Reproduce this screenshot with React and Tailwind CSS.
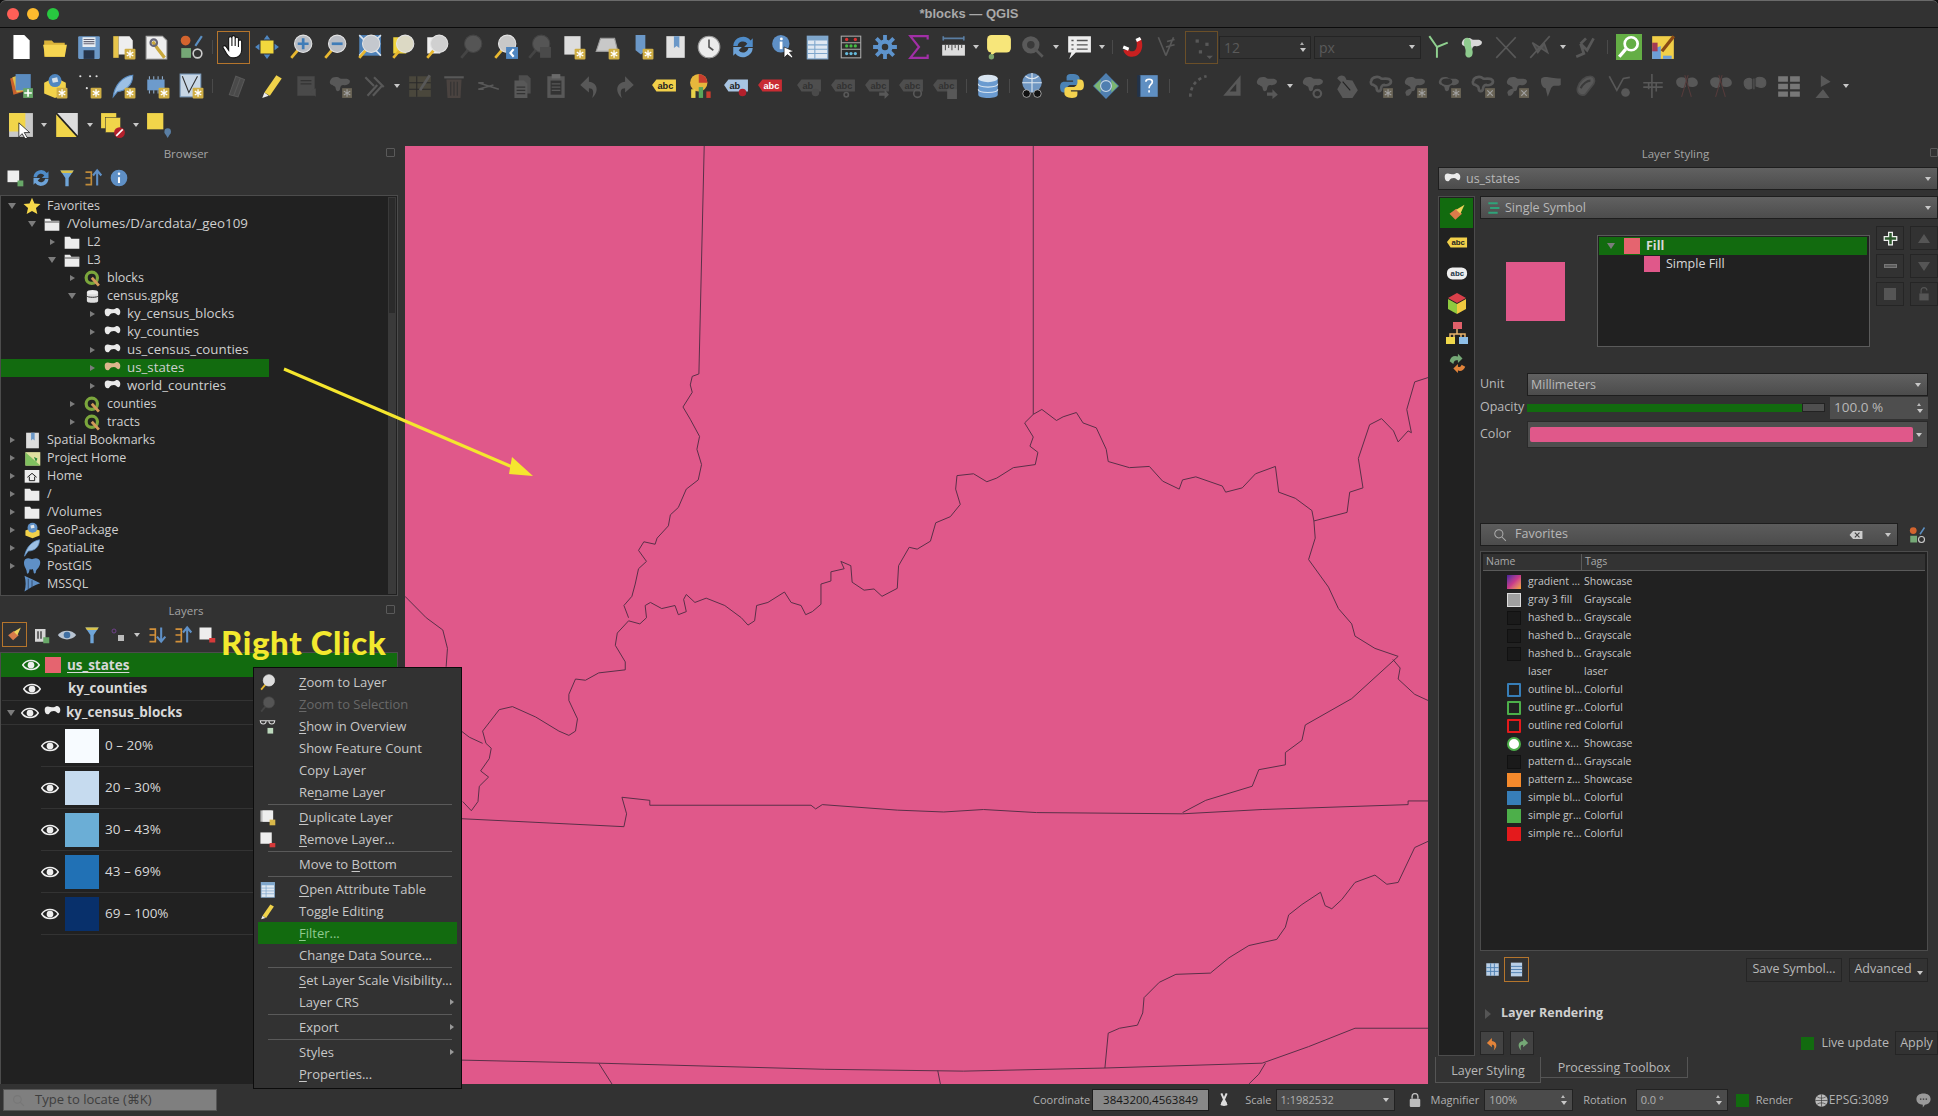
import React from "react";

const Svg = ({ s = 26, children }) => (
  <svg width={s} height={s} viewBox="0 0 24 24" className="shrink-0">
    {children}
  </svg>
);

const D = "#585858";
const D2 = "#4a4a4a";
const BLOB = "M3 7c1-4 7-4 9-2 3 1 7-1 9 2 1 3-3 5-6 4-2 0-3 2-3 4-1 3-4 2-4-1 0-2-2-2-3-3-2 0-3-2-2-4z";

const Star = () => (
  <g>
    <rect x="13.5" y="13.5" width="10" height="10" rx="1" fill="#cfae45" />
    <path d="M18.5 15v7M15.5 16.7l6 3.6M21.5 16.7l-6 3.6" stroke="#fff" strokeWidth="1.2" />
  </g>
);
const GrayBadge = ({ x = false }) => (
  <g>
    <rect x="14" y="14" width="9" height="9" fill="#6a6456" />
    <path d={x ? "M16 16l5 5M21 16l-5 5" : "M18.5 15v7M15.5 16.7l6 3.6M21.5 16.7l-6 3.6"} stroke="#a0a0a0" strokeWidth="1" />
  </g>
);
const Lens = ({ fill = "#b9bdc4", dim, children }) => (
  <g>
    <path d="M9 15l-6 7" stroke={dim ? "#444" : "#e8b830"} strokeWidth="2.5" />
    <circle cx="14" cy="9" r="8" fill={dim ? "#555" : fill} stroke={dim ? "#444" : "#e3e3e3"} strokeWidth="1" />
    {children}
  </g>
);
const Blob = ({ fill = D, children }) => (
  <g>
    <path d={BLOB} fill={fill} />
    {children}
  </g>
);
const Label = ({ fill = "#f2d04a", ink = "#222", dim, t = "abc" }) => (
  <g>
    <path d="M1 11l4-5h18v11H5z" fill={dim ? "#4e4e4e" : fill} />
    <text x="6" y="14.500" fontSize="8.500" fontWeight="700" fontFamily="Liberation Sans, sans-serif" fill={dim ? "#323232" : ink}>
      {t}
    </text>
  </g>
);

const icons = {
  new: <path d="M5 1h10l5 5v17H5z" fill="#fff" />,
  open: (
    <g>
      <path d="M2 6h7l2 2h10v13H2z" fill="#d9b23a" />
      <path d="M1 10h22l-2 11H3z" fill="#f6d551" />
    </g>
  ),
  save: (
    <g>
      <rect x="2" y="2" width="20" height="21" rx="1" fill="#6b98c8" />
      <rect x="6" y="3" width="12" height="9" fill="#e8edf2" />
      <path d="M7 5h10M7 7h10M7 9h10" stroke="#667" />
      <rect x="7" y="15" width="10" height="8" fill="#26344a" />
    </g>
  ),
  layout: (
    <g>
      <path d="M3 2h5v20H3z" fill="#e7c54b" />
      <path d="M8 2h10l3 4v13H8z" fill="#eee" />
      <Star />
    </g>
  ),
  manager: (
    <g>
      <path d="M2 2h15l4 4v17H2z" fill="#eee" stroke="#aaa" />
      <path d="M8 7l5 7 6 8" stroke="#c9a83c" strokeWidth="3" />
      <circle cx="9" cy="8" r="3" fill="none" stroke="#667" strokeWidth="2" />
    </g>
  ),
  style: (
    <g>
      <circle cx="7" cy="6" r="4.5" fill="#d3642e" />
      <path d="M16 11l6-9" stroke="#5b8fc2" strokeWidth="2" />
      <rect x="3" y="13" width="9" height="9" fill="#75a876" />
      <circle cx="18" cy="18" r="4" fill="none" stroke="#ccc" strokeWidth="1.5" />
    </g>
  ),
  hand: (
    <path
      d="M8 13V4a1.5 1.5 0 013 0v7V3a1.5 1.5 0 013 0v8V4.5a1.5 1.5 0 013 0V12V7a1.5 1.5 0 013 0v8c0 4-3 7-7 7s-5-1-7-4l-3-5c-1-2 1-3 2.500-1.500L8 15z"
      fill="#fff"
      stroke="#111"
      strokeWidth="1"
    />
  ),
  panSel: (
    <g>
      <rect x="6" y="6" width="12" height="12" fill="#f2d83d" />
      <path d="M12 1l3 4H9zM12 23l3-4H9zM1 12l4-3v6zM23 12l-4-3v6z" fill="#4f86c0" />
    </g>
  ),
  zoomIn: (
    <Lens>
      <path d="M14 4v10M9 9h10" stroke="#3f7cb8" strokeWidth="2.500" />
    </Lens>
  ),
  zoomOut: (
    <Lens>
      <path d="M9 9h10" stroke="#3f7cb8" strokeWidth="2.500" />
    </Lens>
  ),
  full: (
    <g>
      <rect x="3" y="1" width="20" height="19" fill="#4f82b8" />
      <path d="M3 1l6 6M23 1l-6 6M3 20l6-6M23 20l-6-6" stroke="#d9e4ef" strokeWidth="1.500" />
      <Lens fill="#c4c8ce" />
    </g>
  ),
  zoomSel: (
    <g>
      <rect x="3" y="3" width="12" height="15" fill="#f0d43c" />
      <Lens fill="#dcd9c4" />
    </g>
  ),
  zoomLayer: (
    <g>
      <rect x="3" y="3" width="12" height="15" fill="#eee" />
      <Lens fill="#d0d0d0" />
    </g>
  ),
  zoomNative: <Lens dim />,
  zoomLast: (
    <g>
      <Lens fill="#c8c8c8" />
      <rect x="13" y="12" width="11" height="11" fill="#4f86c0" />
      <path d="M20 14l-3 3.500 3 3.500" stroke="#fff" strokeWidth="2" fill="none" />
    </g>
  ),
  zoomNext: (
    <g>
      <Lens dim />
      <rect x="13" y="12" width="10" height="10" fill="#4a4a4a" />
    </g>
  ),
  mapView: (
    <g>
      <path d="M4 2h15v17H4z" fill="#ddd" />
      <Star />
    </g>
  ),
  map3d: (
    <g>
      <path d="M6 4h13l3 12H2z" fill="#c8c8c8" stroke="#999" />
      <Star />
    </g>
  ),
  bookNew: (
    <g>
      <path d="M7 1h9v14l-4 4-5-4z" fill="#6b98c8" />
      <Star />
    </g>
  ),
  bookShow: (
    <g>
      <rect x="4" y="2" width="17" height="20" fill="#e2e2e2" />
      <path d="M11 2h5v11l-2.500-2-2.500 2z" fill="#6b98c8" />
    </g>
  ),
  clock: (
    <g>
      <circle cx="12" cy="12" r="10" fill="#ececec" stroke="#999" />
      <path d="M12 5v7l4 3" stroke="#555" strokeWidth="1.500" fill="none" />
    </g>
  ),
  refresh: (
    <g>
      <path d="M3 11a9 9 0 0116-5l2-2v8h-8l3-3a5 5 0 00-9 2z" fill="#4f8cc9" />
      <path d="M21 13a9 9 0 01-16 5l-2 2v-8h8l-3 3a5 5 0 009-2z" fill="#6da3d8" />
    </g>
  ),
  identify: (
    <g>
      <circle cx="10" cy="9" r="8" fill="#5f90c6" />
      <rect x="9" y="7" width="2.500" height="7" fill="#fff" />
      <circle cx="10.500" cy="4.500" r="1.300" fill="#fff" />
      <path d="M13 12l0 10 3-3 4 3 1-1-3-4 4-1z" fill="#fff" stroke="#111" strokeWidth=".6" />
    </g>
  ),
  table: (
    <g>
      <rect x="3" y="2" width="19" height="21" fill="#dfe8f2" stroke="#7ea6cc" />
      <rect x="3" y="2" width="19" height="4" fill="#7ea6cc" />
      <path d="M3 10h19M3 14h19M3 18h19M10 6v17" stroke="#7ea6cc" />
    </g>
  ),
  abacus: (
    <g>
      <rect x="3" y="2" width="18" height="20" fill="#2c2c2c" stroke="#aaa" />
      <path d="M3 8h18M3 14h18" stroke="#aaa" />
      <circle cx="8" cy="5" r="1.500" fill="#d33" />
      <circle cx="16" cy="5" r="1.500" fill="#d33" />
      <circle cx="8" cy="11" r="1.500" fill="#4b4" />
      <circle cx="12" cy="11" r="1.500" fill="#4b4" />
      <circle cx="16" cy="11" r="1.500" fill="#4b4" />
      <circle cx="8" cy="18" r="1.500" fill="#6bd" />
      <circle cx="12" cy="18" r="1.500" fill="#6bd" />
      <circle cx="16" cy="18" r="1.500" fill="#6bd" />
    </g>
  ),
  gear: (
    <g>
      <path d="M12 1v22M1 12h22M4 4l16 16M20 4L4 20" stroke="#5d93cc" strokeWidth="3.500" />
      <circle cx="12" cy="12" r="7" fill="#5d93cc" />
      <circle cx="12" cy="12" r="3" fill="#323232" />
    </g>
  ),
  sigma: <path d="M20 5V2H4l8 10-8 10h16v-3" fill="none" stroke="#a12fa6" strokeWidth="2" />,
  ruler: (
    <g>
      <path d="M3 4h19M3 2v4M22 2v4" stroke="#5a7ea3" strokeWidth="1.500" />
      <rect x="2" y="10" width="21" height="10" fill="#ddd" />
      <path d="M5 10v5M8 10v3M11 10v5M14 10v3M17 10v5M20 10v3" stroke="#555" />
    </g>
  ),
  tip: (
    <g>
      <rect x="1" y="1" width="22" height="16" rx="4" fill="#f7e67a" />
      <path d="M5 16l-1 5 6-5z" fill="#f7e67a" />
      <circle cx="5" cy="21" r="2.500" fill="#7da36c" />
    </g>
  ),
  action: (
    <g>
      <circle cx="10" cy="10" r="8" fill="#5a5a5a" />
      <circle cx="10" cy="10" r="3.500" fill="#3a3a3a" />
      <path d="M13 13l8 8" stroke={D} strokeWidth="2.500" />
    </g>
  ),
  msg: (
    <g>
      <path d="M2 2h21v15H9l-6 6 2-6H2z" fill="#eee" />
      <path d="M10 6h10M10 10h10M10 14h10M5 6h2M5 10h2M5 14h2" stroke="#555" strokeWidth="1.300" />
    </g>
  ),
  magnet: (
    <g>
      <path d="M19 4c4 8 0 18-9 17-3 0-6-3-7-6l5-1c1 2 2 2 4 2 4-1 4-7 3-10z" fill="#c82020" />
      <path d="M3 12l5 2M15 6l4-2" stroke="#fff" strokeWidth="3" />
    </g>
  ),
  vertex: (
    <g>
      <path d="M4 3l7 17M18 3l-7 17M11 12l8-2M12 7l7-2" stroke={D} strokeWidth="1.500" fill="none" />
    </g>
  ),
  snap: (
    <g>
      <rect x="7" y="5" width="3" height="3" fill={D} />
      <rect x="16" y="8" width="3" height="3" fill={D} />
      <rect x="10" y="15" width="3" height="3" fill={D} />
      <path d="M17 20h6l-3 3z" fill={D} />
    </g>
  ),
  trim: <path d="M4 2l7 10v10M21 8l-10 4" stroke="#8fd08f" strokeWidth="1.800" fill="none" />,
  reshapeG: (
    <g>
      <path d={BLOB} fill="#d8d8d8" />
      <path d="M5 5c3-4 7 0 6 5 0 3 3 6 1 10-2 3-7 2-6-3 1-4-3-7-1-12z" fill="#8ecb8e" />
    </g>
  ),
  cross: <path d="M3 3l18 19M21 3L3 22" stroke={D} strokeWidth="1.500" />,
  crossDark: <path d="M3 22L21 2M5 8l14 9-3-8-6 8z" stroke={D} strokeWidth="1.500" fill={D2} />,
  zig: <path d="M3 21l7-3-3-9 6 6 6-11M7 9l5-5" stroke={D} strokeWidth="2.500" fill="none" />,
  green: (
    <g>
      <rect width="24" height="24" fill="#64ae45" />
      <circle cx="14" cy="9" r="6" fill="none" stroke="#fff" strokeWidth="2.500" />
      <path d="M9 14l-6 7" stroke="#fff" strokeWidth="3" />
    </g>
  ),
  osm: (
    <g>
      <rect x="2" y="2" width="20" height="21" fill="#f1cf48" />
      <path d="M2 14l8-3v12H2z" fill="#6d9fd8" />
      <rect x="2" y="8" width="5" height="8" fill="#a33a55" />
      <path d="M11 16L22 2" stroke="#8a4a14" strokeWidth="3" />
      <path d="M12 20h8v3h-8z" fill="#6d9fd8" />
    </g>
  ),
  addLayer: (
    <g>
      <path d="M2 5l10-3 3 15-10 3z" fill="#c9612c" />
      <path d="M4 4l6-2 5 3 2 11-9 2z" fill="#e0bd4a" />
      <rect x="7" y="1" width="14" height="15" fill="#5b8cc0" />
      <rect x="14" y="14" width="9" height="9" fill="#68a868" />
      <path d="M18.500 15v7M15 18.500h7" stroke="#fff" strokeWidth="1.500" />
    </g>
  ),
  geopkg: (
    <g>
      <path d="M2 9l10-5 10 5v10l-10 4-10-4z" fill="#f2d24a" />
      <circle cx="12" cy="7" r="6" fill="#4f86c0" />
      <path d="M9 5l5-1 1 4-5 1z" fill="#d5dfe8" />
      <Star />
    </g>
  ),
  vline: (
    <g>
      <circle cx="4" cy="3" r="1" fill="#ddd" />
      <circle cx="13" cy="3" r="1" fill="#ddd" />
      <circle cx="19" cy="3" r="1" fill="#ddd" />
      <circle cx="10" cy="14" r="1" fill="#ddd" />
      <Star />
    </g>
  ),
  feather: (
    <g>
      <path d="M3 22C4 12 11 3 21 2c0 9-7 15-14 15z" fill="#9cc0e4" stroke="#5b8cc0" />
      <Star />
    </g>
  ),
  mesh: (
    <g>
      <rect x="3" y="6" width="16" height="10" fill="#6d9bcc" />
      <path d="M5 3v3M9 3v3M13 3v3M17 3v3M5 16v3M9 16v3M13 16v3M17 16v3" stroke="#8eaccc" />
      <Star />
    </g>
  ),
  vTile: (
    <g>
      <rect x="2" y="1" width="19" height="21" fill="#c8d7e6" stroke="#7fa0c0" />
      <path d="M4 3l6 15 8-15" stroke="#333" fill="none" />
      <Star />
    </g>
  ),
  pencilD: <path d="M4 20L10 3l8 3-6 16zM14 5l-6 16" fill={D2} stroke={D} />,
  pencil: (
    <g>
      <path d="M5 18L16 2l5 3-11 16z" fill="#f0d24a" />
      <path d="M5 18l-2 5 6-2z" fill="#eee" />
    </g>
  ),
  saveD: (
    <g>
      <rect x="4" y="3" width="16" height="18" fill={D2} />
      <path d="M7 7h10M7 10h10" stroke="#333" />
      <path d="M16 17l5-3v8z" fill={D2} />
    </g>
  ),
  blobStar: (
    <Blob fill={D}>
      <GrayBadge />
    </Blob>
  ),
  nodeD: <path d="M4 4l8 8M12 4l9 9M6 21l9-10M11 21l9-10" stroke={D} strokeWidth="2" />,
  tableD: (
    <g>
      <rect x="2" y="3" width="20" height="19" fill="#4a473c" />
      <path d="M2 9h20M2 15h20M9 3v19" stroke="#2a2a2a" />
      <path d="M12 16l9-14" stroke={D} strokeWidth="2.500" />
    </g>
  ),
  trash: (
    <g>
      <path d="M5 6h14l-1 17H6z" fill="#4a4340" />
      <path d="M3 4h18" stroke={D} strokeWidth="2" />
      <path d="M9 8v13M12 8v13M15 8v13" stroke="#333" />
    </g>
  ),
  cut: <path d="M3 9l19 6M3 15l14-4M3 9h5M3 15h5" stroke={D} strokeWidth="1.500" />,
  copy: (
    <g>
      <path d="M9 2h8l3 3v14H9z" fill="#4e4e4e" />
      <path d="M5 7h9l3 3v13H5z" fill={D} />
      <path d="M7 13h8M7 16h8M7 19h8" stroke="#333" />
    </g>
  ),
  paste: (
    <g>
      <rect x="4" y="3" width="16" height="20" fill={D} />
      <rect x="8" y="1" width="8" height="4" fill="#6a6a6a" />
      <rect x="7" y="7" width="10" height="13" fill="#333" />
      <path d="M8 10h8M8 13h8M8 16h8" stroke={D} />
    </g>
  ),
  undo: <path d="M11 3L3 11l8 7v-4c4 0 5 3 3 9 6-5 6-14-3-15z" fill={D} />,
  redo: <path d="M13 3l8 8-8 7v-4c-4 0-5 3-3 9-6-5-6-14 3-15z" fill={D} />,
  abc: <Label />,
  diagram: (
    <g>
      <circle cx="9" cy="9" r="8" fill="#e6b73c" />
      <path d="M9 1a8 8 0 018 8H9z" fill="#c73d2e" />
      <rect x="2" y="15" width="4" height="8" fill="#e8d24a" />
      <rect x="9" y="13" width="4" height="10" fill="#5aa55a" />
      <rect x="16" y="17" width="4" height="6" fill="#c73d2e" />
    </g>
  ),
  labelPin: (
    <g>
      <Label fill="#a8c4e2" t="ab" />
      <circle cx="18" cy="18" r="3.500" fill="#b3202c" />
    </g>
  ),
  labelRed: <Label fill="#c92c33" ink="#fff" />,
  labelD: (
    <g>
      <Label dim t="ab" />
      <circle cx="18" cy="18" r="3.500" fill={D2} />
    </g>
  ),
  labelDot: (
    <g>
      <Label dim />
      <circle cx="15" cy="20" r="2" fill="none" stroke={D} strokeWidth="1.500" />
    </g>
  ),
  labelArrow: (
    <g>
      <Label dim />
      <path d="M14 18h5v-3l4 5-4 4v-3h-5z" fill={D} />
    </g>
  ),
  labelRot: (
    <g>
      <Label dim />
      <circle cx="18" cy="19" r="3.500" fill="none" stroke={D} strokeWidth="1.500" />
    </g>
  ),
  labelEdit: (
    <g>
      <Label dim />
      <rect x="14" y="15" width="9" height="9" fill={D} />
    </g>
  ),
  db: (
    <g>
      <path d="M3 5v15c0 4 18 4 18 0V5z" fill="#6b9bd0" />
      <ellipse cx="12" cy="5" rx="9" ry="3.500" fill="#d8e4f0" />
      <path d="M3 10c0 4 18 4 18 0M3 15c0 4 18 4 18 0" stroke="#d8e4f0" fill="none" />
    </g>
  ),
  globeBin: (
    <g>
      <circle cx="12" cy="9" r="9" fill="#6f96c2" />
      <path d="M3 9h18M12 0v18M6 3c4 3 8 3 12 0" stroke="#dfe7ef" fill="none" />
      <circle cx="7" cy="19" r="3.500" fill="#111" stroke="#ddd" strokeWidth=".6" />
      <circle cx="17" cy="19" r="3.500" fill="#111" stroke="#ddd" strokeWidth=".6" />
    </g>
  ),
  python: (
    <g>
      <path d="M12 1c-5 0-5 2-5 4v2h6v1H5c-3 0-4 2-4 5s1 5 3 5h3v-3c0-2 2-4 4-4h5c2 0 3-1 3-3V5c0-2-2-4-7-4z" fill="#4b82b5" />
      <path d="M12 23c5 0 5-2 5-4v-2h-6v-1h8c3 0 4-2 4-5s-1-5-3-5h-3v3c0 2-2 4-4 4H8c-2 0-3 1-3 3v3c0 2 2 4 7 4z" fill="#f3d24f" />
    </g>
  ),
  metaSearch: (
    <g>
      <path d="M12 0l5 5 7 7-7 7-5 5-5-5-7-7 7-7z" fill="#4f7fb0" />
      <path d="M1 12l6-6v12zM23 12l-6-6v12z" fill="#7cb670" />
      <circle cx="12" cy="12" r="5" fill="none" stroke="#c8d7e6" />
    </g>
  ),
  help: (
    <g>
      <rect x="4" y="2" width="17" height="20" fill="#5f8fc2" />
      <rect x="2" y="2" width="3" height="20" fill="#22334a" />
      <path d="M10 8c0-3 6-3 6 0 0 3-3 2-3 6M13 16v2" stroke="#fff" strokeWidth="1.500" fill="none" />
    </g>
  ),
  curve: <path d="M4 22c0-10 6-17 15-19" stroke={D} strokeWidth="2.500" strokeDasharray="3 3" fill="none" />,
  set: <path d="M3 21L19 2v19zM9 17l6-7v7z" fill={D} fillRule="evenodd" />,
  blobArrow: (
    <Blob>
      <path d="M12 18h5v-3l5 5-5 4v-3h-5z" fill={D} />
    </Blob>
  ),
  blobRot: (
    <Blob>
      <circle cx="16" cy="19" r="3.500" fill="none" stroke={D} strokeWidth="2" />
    </Blob>
  ),
  hex: (
    <g>
      <path d="M8 6l9 1 5 9-5 7H8l-5-8z" fill={D} />
      <path d="M3 5c2-4 7-3 8 0l2 5-3 2z" fill={D} />
      <path d="M8 8l7 8" stroke="#222" />
    </g>
  ),
  ringStar: (
    <g>
      <path d={BLOB} fill="none" stroke={D} strokeWidth="2.500" />
      <GrayBadge />
    </g>
  ),
  partStar: (
    <Blob>
      <path d="M3 18c1-3 5-4 6-3s-1 7-5 6z" fill={D} />
      <GrayBadge />
    </Blob>
  ),
  ringEdit: (
    <g>
      <path d={BLOB} fill={D} />
      <ellipse cx="10" cy="8" rx="5" ry="3" fill="#323232" />
      <GrayBadge />
    </g>
  ),
  ringX: (
    <g>
      <path d={BLOB} fill="none" stroke={D} strokeWidth="2.500" />
      <GrayBadge x />
    </g>
  ),
  partX: (
    <Blob>
      <path d="M3 18c1-3 5-4 6-3s-1 7-5 6z" fill={D} />
      <GrayBadge x />
    </Blob>
  ),
  reshape: <path d="M3 5c4-3 8 0 18 0v6c-4 2-7-1-9 3l-3 8-2-8c-3 0-5-5-4-9z" fill={D} />,
  offset: (
    <g>
      <path d="M5 14C7 7 12 3 17 3c3 0 5 3 3 7l-7 9c-3 3-9 1-8-5z" fill={D} stroke="#4a4a4a" strokeWidth="1.500" />
      <path d="M8 14c2-4 6-7 9-7" stroke="#3a3a3a" strokeWidth="2" fill="none" />
    </g>
  ),
  vtool: (
    <g>
      <path d="M3 3l7 13L16 5l6-1" stroke={D} strokeWidth="1.500" fill="none" />
      <circle cx="18" cy="18" r="4" fill={D} />
    </g>
  ),
  splitF: <path d="M11 1v22M3 9h18M3 13h18M8 9v6M15 9v8" stroke={D} strokeWidth="1.500" />,
  split: (
    <g>
      <path d="M2 8c0-4 6-5 9-3v8c-3 2-9 0-9-5zM13 5c4-2 9 0 9 4s-6 5-9 3z" fill={D} />
      <path d="M7 22l6-20M16 22L10 2" stroke="#553b3b" />
    </g>
  ),
  merge: <path d="M2 9c0-4 5-5 7-3v8c-3 2-7 0-7-5zM13 5c3-2 9-1 9 4s-5 5-9 3zM11 5v10" fill={D} stroke={D} />,
  align: (
    <g>
      <path d="M2 3h9v5H2zM13 3h9v5h-9zM2 10h9v5H2zM13 10h9v5h-9zM2 17h9v5H2zM13 17h9v5h-9z" fill="#777" />
    </g>
  ),
  playTri: <path d="M10 2l9 6-9 5zM12 15l6 8H5z" fill={D} />,
  selectRect: (
    <g>
      <rect x="1" y="1" width="22" height="22" fill="#c9c9c9" />
      <rect x="1" y="1" width="15" height="17" fill="#f1d54a" />
      <path d="M10 10v13l3-3 3 5 2-1-3-5h5z" fill="#fff" stroke="#111" strokeWidth=".7" />
    </g>
  ),
  selectExpr: (
    <g>
      <path d="M2 1h20v22z" fill="#ddd" />
      <path d="M2 1v22h20z" fill="#f1d54a" />
      <path d="M2 1l20 22" stroke="#222" strokeWidth="1.500" />
    </g>
  ),
  deselect: (
    <g>
      <rect x="1" y="1" width="14" height="14" fill="#f1d54a" />
      <rect x="5" y="5" width="14" height="14" fill="#f1d54a" stroke="#333" strokeWidth=".5" />
      <circle cx="18" cy="19" r="5" fill="#b3202c" />
      <path d="M15 22l6-6" stroke="#fff" strokeWidth="1.500" />
    </g>
  ),
  selectLoc: (
    <g>
      <rect x="1" y="1" width="15" height="15" fill="#f1d54a" />
      <circle cx="20" cy="18" r="3" fill="#5a7ea3" />
      <path d="M20 24l-3-5h6z" fill="#5a7ea3" />
    </g>
  ),
};

const rows = [
  ["new", "open", "save", "layout", "manager", "style", "|", "hand", "panSel", "zoomIn", "zoomOut", "full", "zoomSel", "zoomLayer", "zoomNative", "zoomLast", "zoomNext", "mapView", "map3d", "bookNew", "bookShow", "clock", "refresh", 6, "identify", "table", "abacus", "gear", "sigma", "ruler", "v", "tip", "action", "v", "msg", "v", "|", "magnet", "vertex", "snap", "SPIN", "trim", "reshapeG", "cross", "crossDark", "v", "zig", "|", 1, "green", "osm"],
  ["addLayer", "geopkg", "vline", "feather", "mesh", "vTile", "|", 5, "pencilD", "pencil", "saveD", "blobStar", "nodeD", "v", "tableD", "trash", "cut", "copy", "paste", "undo", "redo", 6, "abc", 4, "diagram", "labelPin", "labelRed", 5, "labelD", "labelDot", "labelArrow", "labelRot", "labelEdit", "|", 1, "db", "|", 2, "globeBin", 6, "python", "metaSearch", "|", "help", "|", 9, "curve", "set", "blobArrow", "v", "blobRot", "hex", "ringStar", "partStar", "ringEdit", "ringX", "partX", "reshape", "offset", "vtool", "splitF", "split", "split", "merge", "align", "playTri", "v"],
  ["selectRect", "v", "selectExpr", "v", "deselect", "v", "selectLoc"],
];

const Arrowhead = () => (
  <span className="w-0 h-0 border-l-[3px] border-r-[3px] border-t-[4px] border-l-transparent border-r-transparent border-t-[#c8c8c8]" />
);

const Toolbar = ({ items, className = "" }) => (
  <div className={`flex items-center h-[38px] pl-[4px] ${className}`}>
    {items.map((item, i) => {
      if (typeof item === "number") return <span key={i} className="shrink-0" style={{ width: item }} />;
      if (item === "v")
        return (
          <span key={i} className="w-[12px] shrink-0 flex justify-center">
            <Arrowhead />
          </span>
        );
      if (item === "|")
        return (
          <span key={i} className="w-[8px] shrink-0 flex justify-center">
            <span className="w-px h-[14px] bg-[#4a4a4a]" />
          </span>
        );
      if (item === "SPIN")
        return (
          <div key={i} className="flex gap-[3px] shrink-0 ml-px text-[14px] text-[#5a5a5a]">
            <div className="w-[92px] h-[23px] border border-[#242424] flex items-center justify-between pl-[4px] pr-[4px]">
              12
              <span className="flex flex-col gap-[3px]">
                <span className="w-0 h-0 border-l-[2px] border-r-[2px] border-b-[3px] border-l-transparent border-r-transparent border-b-[#aaa]" />
                <Arrowhead />
              </span>
            </div>
            <div className="w-[107px] h-[23px] border border-[#242424] flex items-center justify-between pl-[4px] pr-[5px]">
              px
              <Arrowhead />
            </div>
          </div>
        );
      const boxed = item === "hand" || item === "snap";
      return (
        <span key={i} className="w-[34px] h-[34px] shrink-0 flex items-center justify-center">
          <span className={boxed ? (item === "hand" ? "border border-[#b5752c] w-[33px] h-[33px] flex items-center justify-center" : "border border-[#6b4f28] w-[33px] h-[33px] flex items-center justify-center") : "flex"}>
            <Svg>{icons[item]}</Svg>
          </span>
        </span>
      );
    })}
  </div>
);

const Tri = ({ open }) =>
  open ? (
    <span className="w-0 h-0 border-l-[4px] border-r-[4px] border-t-[6px] border-l-transparent border-r-transparent border-t-[#7c7c7c]" />
  ) : (
    <span className="w-0 h-0 border-t-[3.500px] border-b-[3.500px] border-l-[5px] border-t-transparent border-b-transparent border-l-[#7c7c7c]" />
  );

const Folder = ({ open }) => (
  <Svg s={16}>
    <path d="M1 4h8l2 3h12v15H1z" fill="#ececec" />
    {open && <path d="M1 9h22" stroke="#555" strokeWidth="1.500" />}
  </Svg>
);
const QgisIcon = () => (
  <Svg s={17}>
    <circle cx="11" cy="11" r="8" fill="none" stroke="#7ba63c" strokeWidth="4.500" />
    <path d="M11 11l10 11" stroke="#d39a5a" strokeWidth="4" />
  </Svg>
);
const Poly = ({ fill = "#eaeaea" }) => (
  <Svg s={17}>
    <path d="M1 8c0-4 3-5 6-4 3 1 7 1 10-1 3-1 6 2 6 5 0 3-1 5-3 5-3-1-3-3-6-3s-5 1-7 4c-3 2-6-1-6-6z" fill={fill} />
  </Svg>
);

const browserTree = [
  { d: 0, open: true, icon: "star", t: "Favorites" },
  { d: 1, open: true, icon: "folderOpen", t: "/Volumes/D/arcdata/_geo109", wide: true },
  { d: 2, icon: "folder", t: "L2" },
  { d: 2, open: true, icon: "folderOpen", t: "L3" },
  { d: 3, icon: "qgis", t: "blocks" },
  { d: 3, open: true, icon: "gpkg", t: "census.gpkg" },
  { d: 4, icon: "poly", t: "ky_census_blocks", wide: true },
  { d: 4, icon: "poly", t: "ky_counties", wide: true },
  { d: 4, icon: "poly", t: "us_census_counties", wide: true },
  { d: 4, icon: "polySel", t: "us_states", sel: true, wide: true },
  { d: 4, icon: "poly", t: "world_countries", wide: true },
  { d: 3, icon: "qgis", t: "counties" },
  { d: 3, icon: "qgis", t: "tracts" },
  { d: 0, icon: "book", t: "Spatial Bookmarks" },
  { d: 0, icon: "home1", t: "Project Home" },
  { d: 0, icon: "home", t: "Home" },
  { d: 0, icon: "folder", t: "/" },
  { d: 0, icon: "folder", t: "/Volumes" },
  { d: 0, icon: "geopackage", t: "GeoPackage" },
  { d: 0, icon: "spatialite", t: "SpatiaLite" },
  { d: 0, icon: "postgis", t: "PostGIS" },
  { d: 0, icon: "mssql", t: "MSSQL", leaf: true },
];

const treeIcon = (name) => {
  switch (name) {
    case "star":
      return (
        <Svg s={18}>
          <path d="M12 1l3.300 7.500 8 .7-6 5.300 1.800 8L12 18.500 4.900 22.500l1.800-8-6-5.300 8-.7z" fill="#f6d84a" />
        </Svg>
      );
    case "folderOpen":
      return <Folder open />;
    case "folder":
      return <Folder />;
    case "qgis":
      return <QgisIcon />;
    case "gpkg":
      return (
        <Svg s={15}>
          <path d="M3 5v14c0 4 18 4 18 0V5z" fill="#ddd" />
          <ellipse cx="12" cy="5" rx="9" ry="3.500" fill="#eee" />
          <path d="M3 11c0 3 18 3 18 0" stroke="#222" strokeWidth="1.500" fill="none" />
        </Svg>
      );
    case "poly":
      return <Poly />;
    case "polySel":
      return <Poly fill="#dcb58c" />;
    case "book":
      return (
        <Svg s={17}>
          <rect x="3" y="1" width="18" height="22" fill="#ddd" />
          <path d="M10 1h5v11l-2.500-2-2.500 2z" fill="#6b98c8" />
        </Svg>
      );
    case "home1":
      return (
        <Svg s={17}>
          <rect x="2" y="3" width="21" height="19" fill="#e0e0a0" />
          <path d="M2 3l21 19H2z" fill="#7fc05f" />
          <path d="M14 10l5 2-2 5z" fill="#2a8a3a" />
        </Svg>
      );
    case "home":
      return (
        <Svg s={16}>
          <rect x="1" y="3" width="22" height="19" fill="#eee" />
          <path d="M5 14l7-6 7 6M8 13v6h8v-6" stroke="#222" strokeWidth="1.500" fill="none" />
        </Svg>
      );
    case "geopackage":
      return (
        <Svg s={17}>
          <path d="M2 12l10-4 10 4v7l-10 4-10-4z" fill="#f2d24a" />
          <circle cx="12" cy="8" r="7" fill="#5f90c6" />
          <path d="M9 5l5-1 1 4-5 1z" fill="#e4e8ec" />
        </Svg>
      );
    case "spatialite":
      return (
        <Svg s={18}>
          <path d="M2 23C4 12 11 3 22 1c0 10-7 15-15 15z" fill="#9cc0e4" stroke="#5b8cc0" />
        </Svg>
      );
    case "postgis":
      return (
        <Svg s={18}>
          <path d="M3 3c4-3 8 0 9 0s5-3 9 0 1 10-1 12c-2 2-3 3-3 6-1 2-3 1-3-2l-1-3c-2 1-3 1-4 0l-1 4c-1 3-3 3-3 0 0-3-2-5-3-8S1 5 3 3z" fill="#5f90c6" />
        </Svg>
      );
    case "mssql":
      return (
        <Svg s={18}>
          <path d="M2 1c6 3 14 6 21 10-7 2-15 7-21 11 2-7 2-14 0-21z" fill="#5f90c6" />
          <path d="M7 5v14M12 7v10" stroke="#2a3a55" />
        </Svg>
      );
    default:
      return null;
  }
};

const DockTitle = ({ t }) => (
  <div className="relative w-[398px] h-[16px] pr-[26px] flex items-center justify-center text-[11.500px] text-[#a4a4a4]">
    {t}
    <span className="absolute right-[3px] top-[2px] w-[9px] h-[9px] border border-[#5a5a5a] rounded-[1px]" />
  </div>
);

const Eye = ({ s = 18 }) => (
  <Svg s={s}>
    <path d="M1 12c5-8 17-8 22 0-5 8-17 8-22 0z" fill="none" stroke="#eee" strokeWidth="2" />
    <circle cx="12" cy="12" r="4.500" fill="#eee" />
  </Svg>
);

const legend = [
  ["bg-[#f7fbff]", "0 – 20%"],
  ["bg-[#c6dbef]", "20 – 30%"],
  ["bg-[#6baed6]", "30 – 43%"],
  ["bg-[#2171b5]", "43 – 69%"],
  ["bg-[#08306b]", "69 – 100%"],
];

const BrowserPanel = () => (
  <div className="flex flex-col">
    <DockTitle t="Browser" />
    <div className="h-[33px] flex items-center gap-[6px] pl-[5px] pb-[2px]">
      <Svg s={20}>
        <rect x="3" y="3" width="14" height="14" fill="#eee" />
        <rect x="15" y="15" width="7" height="7" fill="#68a868" />
      </Svg>
      <Svg s={20}>{icons.refresh}</Svg>
      <Svg s={20}>
        <path d="M4 3h16l-6 9v10h-4V12z" fill="#6fa5d8" />
        <path d="M4 3h16l-2 3H6z" fill="#d9c24a" />
      </Svg>
      <Svg s={20}>
        <path d="M3 5h7v15H3M3 12h7" stroke="#c08b3a" strokeWidth="2" fill="none" />
        <path d="M17 21V4M12 9l5-6 5 6" stroke="#5f90c6" strokeWidth="2.500" fill="none" />
      </Svg>
      <Svg s={20}>
        <circle cx="12" cy="12" r="10" fill="#5f90c6" />
        <path d="M12 11v7" stroke="#fff" strokeWidth="2.500" />
        <circle cx="12" cy="7" r="1.500" fill="#fff" />
      </Svg>
    </div>
    <div className="w-[398px] h-[401px] bg-[#212121] border border-[#4c4c4c] flex">
      <div className="flex-1 text-[#cfcfcf] text-[12.500px] pt-px">
        {browserTree.map((r) => (
          <div key={r.t + r.d} className={r.sel ? "h-[18px] flex items-center w-[268px] bg-[#126b0f]" : "h-[18px] flex items-center"} style={{ paddingLeft: 6 + r.d * 20 }}>
            <span className="w-[10px] flex justify-center shrink-0">{!r.leaf && <Tri open={r.open} />}</span>
            <span className="w-[24px] ml-[3px] shrink-0 flex justify-center">{treeIcon(r.icon)}</span>
            <span className={r.wide ? "ml-[3px] whitespace-nowrap text-[13.300px]" : "ml-[3px] whitespace-nowrap"}>{r.t}</span>
          </div>
        ))}
      </div>
      <div className="w-[8px] mr-[1px] my-px flex flex-col border border-[#3a3a3a]">
        <div className="h-[115px] bg-[#2b2b2b]" />
        <div className="flex-1 bg-[#3a3a3a]" />
      </div>
    </div>
  </div>
);

const LayersPanel = () => (
  <div className="flex flex-col mt-[7px] flex-1 min-h-0">
    <DockTitle t="Layers" />
    <div className="h-[33px] flex items-center pl-[2px] pb-[2px]">
      <span className="w-[25px] h-[25px] border border-[#b5752c] flex items-center justify-center">
        <Svg s={17}>
          <path d="M3 13l8-6 7 6-8 7z" fill="#d97b4a" />
          <path d="M11 8l10-6-5 11z" fill="#eed25a" />
        </Svg>
      </span>
      <span className="w-[27px] flex justify-center">
        <Svg s={18}>
          <rect x="4" y="4" width="14" height="17" fill="#d5d5d5" />
          <path d="M8 7v10M12 7v10" stroke="#444" strokeWidth="2" />
          <rect x="15" y="15" width="8" height="8" fill="#68a868" />
        </Svg>
      </span>
      <span className="w-[25px] flex justify-center">
        <Svg s={20}>
          <path d="M1 12c5-7 17-7 22 0-5 7-17 7-22 0z" fill="#b8c4d2" />
          <circle cx="12" cy="12" r="4" fill="#3f6fa3" />
        </Svg>
      </span>
      <span className="w-[25px] flex justify-center">
        <Svg s={20}>
          <path d="M4 3h16l-6 9v10h-4V12z" fill="#6fa5d8" />
          <path d="M4 3h16l-2 3H6z" fill="#d9c24a" />
        </Svg>
      </span>
      <span className="w-[27px] flex justify-center">
        <Svg s={16}>
          <rect x="12" y="12" width="9" height="9" fill="#bbb" />
          <circle cx="6" cy="6" r="3" fill="none" stroke="#6e3f8a" strokeWidth="1.500" />
        </Svg>
      </span>
      <span className="w-[12px] flex justify-center">
        <Arrowhead />
      </span>
      <span className="w-[27px] flex justify-center">
        <Svg s={20}>
          <path d="M3 5h7v15H3M3 12h7" stroke="#d3913a" strokeWidth="2" fill="none" />
          <path d="M17 3v17M12 14l5 6 5-6" stroke="#5f90c6" strokeWidth="2.500" fill="none" />
        </Svg>
      </span>
      <span className="w-[25px] flex justify-center">
        <Svg s={20}>
          <path d="M3 5h7v15H3M3 12h7" stroke="#d3913a" strokeWidth="2" fill="none" />
          <path d="M17 21V4M12 9l5-6 5 6" stroke="#5f90c6" strokeWidth="2.500" fill="none" />
        </Svg>
      </span>
      <span className="w-[24px] flex justify-center">
        <Svg s={18}>
          <rect x="2" y="2" width="16" height="16" fill="#eee" />
          <rect x="15" y="16" width="8" height="6" fill="#d63a3a" />
        </Svg>
      </span>
    </div>
    <div className="w-[398px] flex-1 bg-[#212121] border border-[#4c4c4c] border-b-0 text-[13.500px] text-[#d8d8d8]">
      <div className="h-[24px] bg-[#126b0f] flex items-center pl-[21px] font-bold">
        <Eye />
        <span className="w-[16px] h-[16px] bg-[#e5646f] ml-[5px]" />
        <span className="ml-[6px] underline underline-offset-2">us_states</span>
      </div>
      <div className="h-[24px] flex items-center pl-[21px] font-bold border-b border-[#333] ml-px">
        <Eye />
        <span className="ml-[27px]">ky_counties</span>
      </div>
      <div className="h-[24px] flex items-center pl-[6px] font-bold border-b border-[#333]">
        <span className="w-[8px] mr-[6px] flex justify-center">
          <Tri open />
        </span>
        <Eye />
        <span className="ml-[5px]">
          <Poly />
        </span>
        <span className="ml-[5px]">ky_census_blocks</span>
      </div>
      {legend.map(([c, t]) => (
        <div key={t} className="h-[42px] ml-[40px] flex items-center border-b border-[#333]">
          <Eye />
          <span className={`w-[34px] h-[34px] ml-[6px] ${c}`} />
          <span className="ml-[6px] font-normal">{t}</span>
        </div>
      ))}
    </div>
  </div>
);

const MapView = () => (
  <div className="w-[1023px] bg-[#e0588a] shrink-0">
    <svg className="w-full h-full block" viewBox="8 10 1542 1531" preserveAspectRatio="none">
      <g fill="none" stroke="#5a3048" strokeWidth="1">
        <path vectorEffect="non-scaling-stroke" d="M459 10L451 382 441 386 438 400 441 412 427 436 438 456 452 484 448 505 455 530 450 555 432 570 420 600 408 612 405 630 388 650 385 660 368 656 360 670 372 688 360 700 355 725 350 745 338 760 345 780" />
        <path vectorEffect="non-scaling-stroke" d="M345 785L328 805 325 825 340 852 340 865 300 870 280 882 265 880 255 905 255 915 268 945 265 965 255 972 240 965 205 942 170 925 150 930 125 965 130 985 138 993 135 1010 122 1030 134 1040 120 1055 118 1080 108 1095 95 1080" />
        <path vectorEffect="non-scaling-stroke" d="M345 785L362 790 372 780 370 760 378 755 395 765 415 760 420 775 432 770 428 750 432 742 445 755 462 748 490 760 515 780 525 792 535 785 538 760 555 755 580 738 590 755 605 760 612 775 622 770 635 758 635 725 650 720 650 705 670 700 665 688 680 695 682 722 700 735 715 733 727 745 750 732 752 695 768 665 780 668 800 655 808 625 830 615 845 595 838 570 840 548 865 545 885 558 900 552 925 535 958 530 962 510 950 500 955 485 942 462 955 448 968 440 990 458 1000 452 1020 445 1030 462 1050 470 1065 505 1068 525 1100 535 1130 533 1150 557 1175 570 1180 555 1200 550 1240 565 1245 575 1270 568 1290 545 1320 533 1325 575 1350 585 1375 605 1378 622 1380 650 1370 685 1400 730 1415 765 1435 790 1440 810 1470 830 1505 843" />
        <path vectorEffect="non-scaling-stroke" d="M955 10V448" />
        <path vectorEffect="non-scaling-stroke" d="M1378 622L1428 608 1432 575 1452 568 1445 520 1462 465 1480 455 1498 475 1505 493 1520 475 1525 478 1518 440 1530 395 1550 388" />
        <path vectorEffect="non-scaling-stroke" d="M1505 843L1435 912 1365 955 1360 980 1335 1000 1335 1020 1295 1028 1285 1055 1215 1078 1180 1098" />
        <path vectorEffect="non-scaling-stroke" d="M1497 848L1508 862 1505 880 1530 905 1550 915" />
        <path vectorEffect="non-scaling-stroke" d="M93 1108L338 1121 342 1100 335 1073 377 1078 377 1086 620 1086 627 1092 637 1085 750 1094 820 1097 880 1093 960 1098 1180 1100 1300 1093 1520 1085 1520 1079 1550 1079" />
        <path vectorEffect="non-scaling-stroke" d="M1550 1145L1530 1155 1505 1212 1488 1215 1470 1200 1440 1212 1420 1240 1405 1255 1395 1250 1388 1228 1360 1248 1340 1265 1335 1285 1322 1305 1280 1315 1250 1335 1222 1360 1170 1362 1145 1375 1122 1400 1120 1425 1112 1445 1085 1450 1068 1458 1063 1515" />
        <path vectorEffect="non-scaling-stroke" d="M93 1502L300 1507 640 1517 850 1520 1060 1515 1300 1507 1370 1480 1440 1450 1550 1450" />
        <path vectorEffect="non-scaling-stroke" d="M300 1507L320 1541M811 1519L815 1541M1305 1507L1295 1525 1280 1541" />
        <path vectorEffect="non-scaling-stroke" d="M8 745L40 780 65 800 72 830 70 860M93 965L105 975 125 985" />
      </g>
    </svg>
  </div>
);

const Combo = ({ className, icon, t }) => (
  <div className={`bg-gradient-to-b from-[#616161] to-[#4c4c4c] border border-[#1e1e1e] flex items-center justify-between pr-[6px] text-[12.500px] text-[#b8b8b8] ${className}`}>
    <span className="flex items-center pt-px">
      {icon}
      {t}
    </span>
    <Arrowhead />
  </div>
);

const SmallBtn = ({ children }) => (
  <div className="h-[24px] w-[28px] border border-[#252525] flex items-center justify-center">{children}</div>
);

const symbols = [
  ["gradient ...", "Showcase", "grad"],
  ["gray 3 fill", "Grayscale", "gray"],
  ["hashed b...", "Grayscale", "dark"],
  ["hashed b...", "Grayscale", "dark"],
  ["hashed b...", "Grayscale", "dark"],
  ["laser", "laser", "none"],
  ["outline bl...", "Colorful", "oblue"],
  ["outline gr...", "Colorful", "ogreen"],
  ["outline red", "Colorful", "ored"],
  ["outline x...", "Showcase", "xr"],
  ["pattern d...", "Grayscale", "dark"],
  ["pattern z...", "Showcase", "orange"],
  ["simple bl...", "Colorful", "blue"],
  ["simple gr...", "Colorful", "green"],
  ["simple re...", "Colorful", "red"],
];

const swatchClass = {
  grad: "bg-gradient-to-br from-[#4b1d9e] via-[#c83a8a] to-[#f5a623]",
  gray: "bg-[#a0a0a0] border border-[#ddd]",
  dark: "bg-[#1a1a1a] border border-[#111]",
  none: "",
  oblue: "border-2 border-[#377eb8] rounded-[1px]",
  ogreen: "border-2 border-[#4daf4a] rounded-[1px]",
  ored: "border-2 border-[#e41a1c] rounded-[1px]",
  xr: "bg-white rounded-full border-2 border-[#4daf4a]",
  orange: "bg-[#f58a2c]",
  blue: "bg-[#377eb8]",
  green: "bg-[#4daf4a]",
  red: "bg-[#e41a1c]",
};

const TabIcon = ({ children, active }) => (
  <div className={active ? "h-[30px] bg-[#126b0f] flex items-center justify-center" : "h-[30px] flex items-center justify-center"}>{children}</div>
);

const StylingPanel = () => (
  <div className="flex-1 min-w-0 pl-[7px] flex flex-col">
    <div className="relative h-[16px] pr-[22px] flex items-center justify-center text-[11.500px] text-[#a4a4a4]">
      Layer Styling
      <span className="absolute right-[0px] top-[2px] w-[8px] h-[9px] border border-[#5a5a5a] rounded-[1px]" />
    </div>
    <Combo
      className="h-[23px] mt-[5px] ml-[3px]"
      t="us_states"
      icon={
        <span className="mx-[5px] flex">
          <Poly />
        </span>
      }
    />
    <div className="flex mt-[6px] ml-[3px] h-[861px] relative">
      <div className="w-[37px] h-[860px] bg-[#212121] border border-[#4c4c4c] p-px flex flex-col shrink-0">
        <TabIcon active>
          <Svg s={20}>
            <path d="M3 13l8-6 7 6-8 7z" fill="#d97b4a" />
            <path d="M11 8l10-6-5 11z" fill="#eed25a" />
          </Svg>
        </TabIcon>
        <TabIcon>
          <Svg s={22}>{icons.abc}</Svg>
        </TabIcon>
        <TabIcon>
          <Svg s={22}>
            <rect x="1" y="6" width="22" height="13" rx="6" fill="#eee" />
            <text x="5" y="15.500" fontSize="8.500" fontWeight="700" fontFamily="Liberation Sans, sans-serif" fill="#234">
              abc
            </text>
          </Svg>
        </TabIcon>
        <TabIcon>
          <Svg s={24}>
            <path d="M12 2l9 5-9 5-9-5z" fill="#d9404a" />
            <path d="M3 8l9 5v10l-9-5z" fill="#8fc93f" />
            <path d="M21 8l-9 5v10l9-5z" fill="#f0c93f" />
          </Svg>
        </TabIcon>
        <TabIcon>
          <Svg s={24}>
            <rect x="8" y="1" width="9" height="7" fill="#e0606a" />
            <path d="M12 8v5M5 17v-4h15v4M9 13v4M16 13v4" stroke="#e8b36a" strokeWidth="1.500" fill="none" />
            <rect x="1" y="16" width="9" height="7" fill="#f0d84a" />
            <rect x="14" y="16" width="9" height="7" fill="#8ebfe8" />
          </Svg>
        </TabIcon>
        <TabIcon>
          <Svg s={22}>
            <path d="M4 10c1-5 5-7 9-5V2l5 5-5 5V9c-3 0-4 0-5 4z" fill="#75a876" />
            <path d="M21 16c-1 3-5 6-8 4v3l-5-5 5-5v3c3 1 3 0 4-2z" fill="#e3843a" />
          </Svg>
        </TabIcon>
      </div>
      <div className="flex-1 min-w-0 pl-[5px] flex flex-col">
        <Combo
          className="h-[23px]"
          t="Single Symbol"
          icon={
            <span className="mx-[5px] flex">
              <Svg s={14}>
                <path d="M4 4h16M7 12h16M4 20h16" stroke="#2fa37a" strokeWidth="3.500" />
              </Svg>
            </span>
          }
        />
        <div className="flex items-start mt-[6px]">
          <div className="w-[117px] pl-[26px] pt-[37px] shrink-0">
            <div className="w-[59px] h-[59px] bg-[#e0588a]" />
          </div>
          <div className="w-[273px] h-[112px] mt-[10px] bg-[#212121] border border-[#5a5a5a] p-px shrink-0 text-[12.500px] text-[#d8d8d8]">
            <div className="w-[268px] h-[18px] bg-[#126b0f] flex items-center pl-[8px] font-bold">
              <Tri open />
              <span className="w-[16px] h-[16px] bg-[#e5646f] ml-[9px]" />
              <span className="ml-[6px]">Fill</span>
            </div>
            <div className="h-[18px] flex items-center pl-[45px]">
              <span className="w-[16px] h-[16px] bg-[#e0588a]" />
              <span className="ml-[6px]">Simple Fill</span>
            </div>
          </div>
          <div className="grid grid-cols-2 gap-x-[6px] gap-y-[4px] ml-[6px] mt-px">
            <SmallBtn>
              <Svg s={15}>
                <path d="M9 2h6v7h7v6h-7v7H9v-7H2V9h7z" fill="#2c5a2c" stroke="#eee" strokeWidth="2" />
              </Svg>
            </SmallBtn>
            <SmallBtn>
              <span className="w-0 h-0 border-l-[6px] border-r-[6px] border-b-[9px] border-l-transparent border-r-transparent border-b-[#555]" />
            </SmallBtn>
            <SmallBtn>
              <span className="w-[13px] h-[4px] bg-[#5c5c5c] border border-[#777]" />
            </SmallBtn>
            <SmallBtn>
              <span className="w-0 h-0 border-l-[6px] border-r-[6px] border-t-[9px] border-l-transparent border-r-transparent border-t-[#555]" />
            </SmallBtn>
            <SmallBtn>
              <span className="w-[12px] h-[12px] bg-[#555]" />
            </SmallBtn>
            <SmallBtn>
              <Svg s={14}>
                <rect x="4" y="11" width="16" height="12" fill="#555" />
                <path d="M7 11V6a5 5 0 0110 0" stroke="#555" strokeWidth="2" fill="none" />
              </Svg>
            </SmallBtn>
          </div>
        </div>
        <div className="mt-[26px] flex flex-col text-[12.500px] text-[#b8b8b8] pr-[10px]">
          <div className="flex items-center h-[23px]">
            <span className="w-[47px]">Unit</span>
            <Combo className="flex-1 h-[23px]" t={<span className="pl-[3px]">Millimeters</span>} />
          </div>
          <div className="flex items-center h-[23px]">
            <span className="w-[47px]">Opacity</span>
            <div className="w-[298px] h-[9px] flex items-center">
              <span className="w-[275px] h-[8px] bg-[#126b0f]" />
              <span className="w-[23px] h-[9px] bg-[#4f4f4f] border border-[#222]" />
            </div>
            <div className="flex-1 h-[22px] ml-[5px] bg-[#4e4e4e] flex items-center justify-between pl-[4px] pr-[5px] text-[13.500px]">
              100.0 %
              <span className="flex flex-col gap-[3px]">
                <span className="w-0 h-0 border-l-[2px] border-r-[2px] border-b-[3px] border-l-transparent border-r-transparent border-b-[#bbb]" />
                <Arrowhead />
              </span>
            </div>
          </div>
          <div className="flex items-center h-[27px] mt-[2px]">
            <span className="w-[47px]">Color</span>
            <div className="flex-1 h-[27px] bg-[#4e4e4e] border border-[#2a2a2a] flex items-center pl-[2px] pr-[5px]">
              <span className="flex-1 h-[15px] bg-[#e0588a] rounded-[2px]" />
              <span className="ml-[3px] flex">
                <Arrowhead />
              </span>
            </div>
          </div>
        </div>
        <div className="flex items-center mt-[75px]">
          <div className="w-[418px] h-[23px] bg-gradient-to-b from-[#5c5c5c] to-[#4c4c4c] border border-[#1e1e1e] flex items-center text-[12.500px] text-[#b8b8b8] pl-[12px] pr-[6px]">
            <Svg s={14}>
              <circle cx="10" cy="10" r="7" fill="none" stroke="#aaa" strokeWidth="1.800" />
              <path d="M15 15l7 7" stroke="#aaa" strokeWidth="1.800" />
            </Svg>
            <span className="ml-[8px] flex-1">Favorites</span>
            <Svg s={14}>
              <path d="M1 12l6-7h16v14H7z" fill="#ccc" />
              <path d="M10 8l8 8M18 8l-8 8" stroke="#444" strokeWidth="2" />
            </Svg>
            <span className="ml-[22px] flex">
              <Arrowhead />
            </span>
          </div>
          <span className="ml-[10px] flex">
            <Svg s={18}>{icons.style}</Svg>
          </span>
        </div>
        <div className="mt-[5px] mr-[10px] h-[400px] bg-[#212121] border border-[#4c4c4c] p-[2px] text-[10.500px] text-[#c6c6c6]">
          <div className="h-[17px] bg-[#333] border-b border-[#5a5a5a] flex items-center text-[#a8a8a8]">
            <span className="w-[99px] pl-[3px] border-r border-[#5a5a5a]">Name</span>
            <span className="pl-[3px]">Tags</span>
          </div>
          <div className="pt-[2px]">
            {symbols.map(([n, t, k], i) => (
              <div key={i} className="h-[18px] flex items-center">
                <span className="w-[45px] shrink-0 pl-[24px] flex">
                  <span className={`w-[14px] h-[14px] block ${swatchClass[k]}`} />
                </span>
                <span className="w-[56px] shrink-0 whitespace-nowrap">{n}</span>
                <span>{t}</span>
              </div>
            ))}
          </div>
        </div>
        <div className="flex items-center justify-between mt-[6px] mr-[10px] h-[25px] text-[12.500px] text-[#b8b8b8]">
          <div className="flex items-center">
            <span className="w-[24px] flex justify-center">
              <Svg s={15}>
                <rect x="2" y="2" width="20" height="20" fill="#b9d0e8" />
                <path d="M2 9h20M2 15h20M9 2v20M15 2v20" stroke="#4f7fb0" strokeWidth="1.500" />
              </Svg>
            </span>
            <span className="w-[25px] h-[25px] border border-[#b5752c] flex items-center justify-center">
              <Svg s={15}>
                <rect x="3" y="1" width="18" height="22" fill="#b9d0e8" />
                <path d="M3 7h18M3 12h18M3 17h18" stroke="#4f7fb0" strokeWidth="1.500" />
              </Svg>
            </span>
          </div>
          <div className="flex items-center gap-[7px]">
            <span className="h-[24px] w-[96px] border border-[#252525] flex items-center justify-center">Save Symbol...</span>
            <span className="h-[24px] w-[79px] border border-[#252525] flex items-center justify-center">
              Advanced
              <span className="ml-[5px] mt-[7px] flex">
                <Arrowhead />
              </span>
            </span>
          </div>
        </div>
        <div className="flex items-center mt-[23px] h-[17px] text-[12.500px] font-bold text-[#d0d0d0]">
          <span className="ml-[5px] mr-[10px] w-0 h-0 border-t-[5px] border-b-[5px] border-l-[6px] border-t-transparent border-b-transparent border-l-[#555]" />
          Layer Rendering
        </div>
        <div className="flex items-center justify-between mt-[9px] h-[24px] text-[12.500px] text-[#b8b8b8]">
          <div className="flex gap-[6px]">
            <span className="w-[24px] h-[24px] bg-[#434343] border border-[#252525] flex items-center justify-center">
              <Svg s={15}>
                <path d="M11 3L3 11l8 7v-4c4 0 5 3 3 9 6-5 6-14-3-15z" fill="#e3843a" />
              </Svg>
            </span>
            <span className="w-[24px] h-[24px] bg-[#434343] border border-[#252525] flex items-center justify-center">
              <Svg s={15}>
                <path d="M13 3l8 8-8 7v-4c-4 0-5 3-3 9-6-5-6-14 3-15z" fill="#75a876" />
              </Svg>
            </span>
          </div>
          <div className="flex items-center">
            <span className="w-[13px] h-[13px] bg-[#126b0f]" />
            <span className="ml-[7px]">Live update</span>
            <span className="ml-[6px] h-[24px] w-[43px] border border-[#252525] flex items-center justify-center">Apply</span>
          </div>
        </div>
      </div>
    </div>
    <div className="flex h-[26px] text-[12.500px] text-[#b8b8b8] items-start">
      <span className="w-[106px] h-[26px] pt-[3px] border border-t-0 border-[#555] bg-[#333] flex items-center justify-center">Layer Styling</span>
      <span className="w-[147px] h-[21px] pt-[2px] border border-t-0 border-l-0 border-[#555] flex items-center justify-center">Processing Toolbox</span>
    </div>
  </div>
);

const MenuItem = ({ children, icon, off, active, arrow }) => (
  <div className={`h-[22px] flex items-center relative ${active ? "bg-[#126b0f] text-[#8fc98f]" : off ? "text-[#686868]" : "text-[#c8c8c8]"}`}>
    <span className="w-[41px] pl-[1px] shrink-0 flex justify-start">{icon}</span>
    <span className="whitespace-nowrap">{children}</span>
    {arrow && <span className="absolute right-[3px] w-0 h-0 border-t-[3.500px] border-b-[3.500px] border-l-[4px] border-t-transparent border-b-transparent border-l-[#999]" />}
  </div>
);
const MenuSep = () => <div className="h-[3px] flex items-center ml-[10px] mr-[5px] border-b border-[#5a5a5a] mb-px -mt-px" />;
const U = ({ children }) => <u className="underline-offset-2">{children}</u>;

const ContextMenu = () => (
  <div className="absolute left-[253px] top-[667px] w-[209px] h-[422px] bg-[#323232] border border-[#0c0c0c] pt-[3px] px-[4px] text-[13px] leading-none">
    <MenuItem icon={<Svg s={17}><Lens fill="#ddd" /></Svg>}>
      <U>Z</U>oom to Layer
    </MenuItem>
    <MenuItem off icon={<Svg s={17}><Lens dim /></Svg>}>
      <U>Z</U>oom to Selection
    </MenuItem>
    <MenuItem
      icon={
        <Svg s={17}>
          <path d="M1 4h22M2 4c0 6 8 6 8 0M14 4c0 6 8 6 8 0" stroke="#ddd" strokeWidth="1.500" fill="none" />
          <rect x="12" y="14" width="8" height="8" fill="#bcd8bc" />
        </Svg>
      }
    >
      <U>S</U>how in Overview
    </MenuItem>
    <MenuItem>Show Feature Count</MenuItem>
    <MenuItem>Copy Layer</MenuItem>
    <MenuItem>
      Re<U>n</U>ame Layer
    </MenuItem>
    <MenuSep />
    <MenuItem
      icon={
        <Svg s={17}>
          <rect x="2" y="2" width="16" height="16" fill="#bbb" />
          <rect x="5" y="2" width="15" height="16" fill="#eee" />
          <rect x="15" y="15" width="8" height="8" fill="#d9b84a" />
        </Svg>
      }
    >
      <U>D</U>uplicate Layer
    </MenuItem>
    <MenuItem
      icon={
        <Svg s={17}>
          <rect x="2" y="2" width="16" height="16" fill="#eee" />
          <rect x="15" y="17" width="8" height="6" fill="#d63a3a" />
        </Svg>
      }
    >
      <U>R</U>emove Layer...
    </MenuItem>
    <MenuSep />
    <MenuItem>
      Move to <U>B</U>ottom
    </MenuItem>
    <MenuSep />
    <MenuItem icon={<Svg s={17}>{icons.table}</Svg>}>
      <U>O</U>pen Attribute Table
    </MenuItem>
    <MenuItem icon={<Svg s={17}>{icons.pencil}</Svg>}>Toggle Editing</MenuItem>
    <MenuItem active>
      <U>F</U>ilter...
    </MenuItem>
    <MenuItem>Change Data Source...</MenuItem>
    <MenuSep />
    <MenuItem>
      <U>S</U>et Layer Scale Visibility...
    </MenuItem>
    <MenuItem arrow>Layer CRS</MenuItem>
    <MenuSep />
    <MenuItem arrow>Export</MenuItem>
    <MenuSep />
    <MenuItem arrow>Styles</MenuItem>
    <MenuItem>
      <U>P</U>roperties...
    </MenuItem>
  </div>
);

const StatusBar = () => (
  <div className="h-[32px] bg-[#323232] flex items-center text-[11px] text-[#b0b0b0] pl-[3px] relative">
    <div className="w-[214px] h-[22px] bg-[#7f7f7f] border border-[#555] flex items-center pl-[8px] text-[#3e3e3e] text-[13px] shrink-0 font-['Open_Sans','DejaVu_Sans',sans-serif]">
      <span className="w-[23px] flex">
        <Svg s={13}>
          <circle cx="10" cy="10" r="7" fill="none" stroke="#777" strokeWidth="2" />
          <path d="M15 15l7 7" stroke="#777" strokeWidth="2" />
        </Svg>
      </span>
      Type to locate (⌘K)
    </div>
    <span className="ml-[816px] whitespace-nowrap">Coordinate</span>
    <div className="ml-[2px] w-[117px] h-[22px] bg-[#888] border border-[#1e1e1e] flex items-center justify-center text-[#161616] text-[11.500px] shrink-0">3843200,4563849</div>
    <span className="ml-[3px] w-[24px] flex justify-center">
      <Svg s={16}>
        <path d="M8 2l8 18M16 2L8 20" stroke="#ddd" strokeWidth="3" />
        <circle cx="12" cy="17" r="4" fill="#ddd" />
      </Svg>
    </span>
    <span className="ml-[9px]">Scale</span>
    <div className="ml-[4px] w-[119px] h-[22px] bg-[#4b4b4b] border border-[#222] flex items-center justify-between pl-[4px] pr-[5px] shrink-0">
      1:1982532
      <Arrowhead />
    </div>
    <span className="ml-[13px] flex">
      <Svg s={14}>
        <rect x="3" y="10" width="18" height="14" rx="2" fill="#bbb" />
        <path d="M7 10V6a5 5 0 0110 0v4" stroke="#bbb" strokeWidth="2.500" fill="none" />
      </Svg>
    </span>
    <span className="ml-[9px]">Magnifier</span>
    <div className="ml-[5px] w-[89px] h-[22px] bg-[#4b4b4b] border border-[#222] flex items-center justify-between pl-[4px] pr-[5px] shrink-0">
      100%
      <span className="flex flex-col gap-[3px]">
        <span className="w-0 h-0 border-l-[2px] border-r-[2px] border-b-[3px] border-l-transparent border-r-transparent border-b-[#bbb]" />
        <Arrowhead />
      </span>
    </div>
    <span className="ml-[10px]">Rotation</span>
    <div className="ml-[9px] w-[92px] h-[22px] bg-[#4b4b4b] border border-[#222] flex items-center justify-between pl-[4px] pr-[5px] shrink-0">
      0.0 °
      <span className="flex flex-col gap-[3px]">
        <span className="w-0 h-0 border-l-[2px] border-r-[2px] border-b-[3px] border-l-transparent border-r-transparent border-b-[#bbb]" />
        <Arrowhead />
      </span>
    </div>
    <span className="ml-[8px] w-[13px] h-[13px] bg-[#126b0f] shrink-0" />
    <span className="ml-[7px]">Render</span>
    <span className="ml-[21px] flex">
      <Svg s={15}>
        <circle cx="12" cy="12" r="10" fill="#bbb" />
        <path d="M2 12h20M12 2v20M5 6c4 3 10 3 14 0M5 18c4-3 10-3 14 0" stroke="#333" fill="none" />
      </Svg>
    </span>
    <span className="whitespace-nowrap text-[12px]">EPSG:3089</span>
    <span className="ml-[26px] flex">
      <Svg s={17}>
        <path d="M12 2c6 0 10 3 10 8s-4 8-8 8l-3 4v-4c-5 0-9-3-9-8s4-8 10-8z" fill="#9a9a9a" />
        <path d="M7 10h2M11 10h2M15 10h2" stroke="#333" strokeWidth="2" />
      </Svg>
    </span>
  </div>
);

export default function App() {
  return (
    <div className="relative w-[1938px] h-[1116px] overflow-hidden bg-[#111] font-['Open_Sans',sans-serif]">
      <div className="h-[28px] border-b border-[#0c0c0c] border-t-[#6a6a6a] border-t bg-[#323232] rounded-t-[6px] flex items-center relative">
        <div className="flex gap-[8px] pl-[7px]">
          <span className="w-[12px] h-[12px] rounded-full bg-[#ff5f57]" />
          <span className="w-[12px] h-[12px] rounded-full bg-[#febb2e]" />
          <span className="w-[12px] h-[12px] rounded-full bg-[#28c840]" />
        </div>
        <span className="absolute left-0 right-0 text-center text-[13px] font-semibold text-[#a9a9a9] font-['Liberation_Sans',sans-serif]">*blocks — QGIS</span>
      </div>
      <div className="h-[118px] bg-[#323232]">
        <Toolbar items={rows[0]} />
        <Toolbar items={rows[1]} className="mt-px" />
        <Toolbar items={rows[2]} className="mt-px" />
      </div>
      <div className="flex h-[938px] bg-[#323232]">
        <div className="w-[405px] shrink-0 flex flex-col">
          <BrowserPanel />
          <LayersPanel />
        </div>
        <MapView />
        <StylingPanel />
      </div>
      <StatusBar />

      <svg className="absolute left-0 top-0 pointer-events-none" width="1938" height="1116">
        <path d="M284 369L517 469" stroke="#f5e62e" strokeWidth="3" />
        <path d="M533 476L512 457 509 474z" fill="#f5e62e" />
      </svg>
      <span className="absolute left-[221px] top-[623px] text-[33px] tracking-[0.6px] leading-[38px] font-black text-[#f3e92e] font-['Lato',sans-serif] whitespace-nowrap">Right Click</span>
      <ContextMenu />
    </div>
  );
}
